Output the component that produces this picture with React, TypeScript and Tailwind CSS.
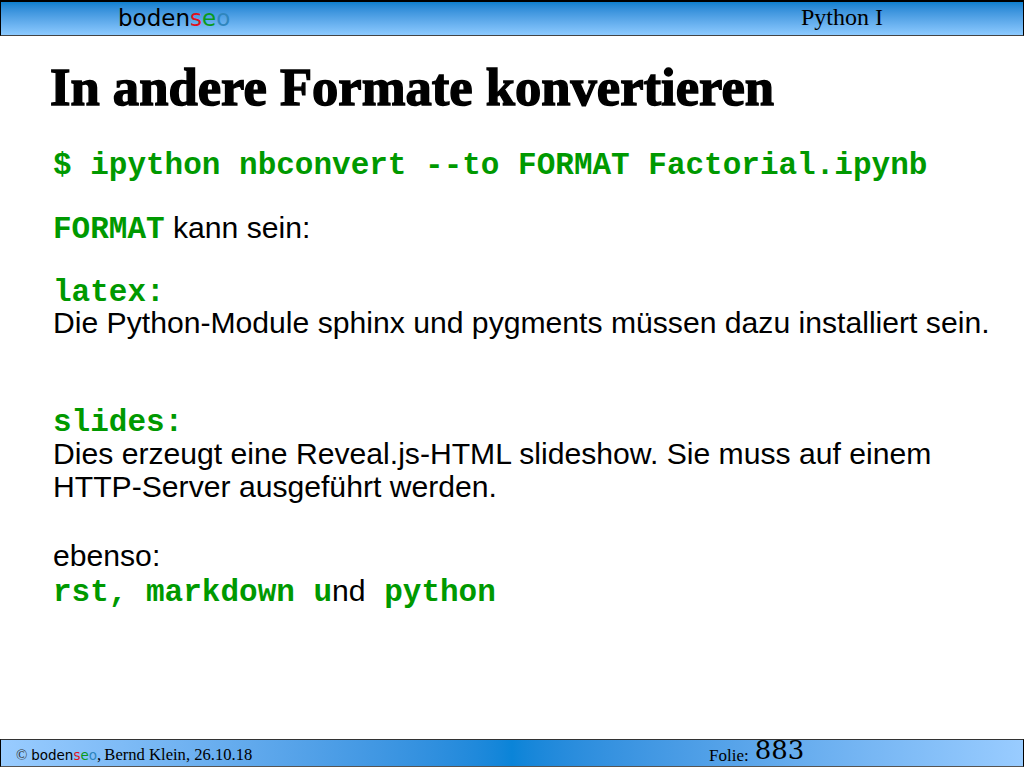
const sans = "font-['Liberation_Sans',Arial,sans-serif]";
const serif = "font-['Liberation_Serif','Times_New_Roman',serif]";
const mono = "font-['Liberation_Mono','Courier_New',monospace] font-bold text-[#009900] text-[31px]";

function Logo({ className }: { className: string }) {
  return (
    <span className={`font-['DejaVu_Sans',sans-serif] ${className}`}>
      <span className="text-black">boden</span>
      <span className="text-[#e0101c]">s</span>
      <span className="text-[#0a9a1a]">e</span>
      <span className="text-[#2f86bd]">o</span>
    </span>
  );
}

export default function App() {
  return (
    <div className={`flex h-[768px] w-[1024px] flex-col overflow-hidden bg-white text-black ${sans}`}>
      <header className="flex h-9 items-center border border-t-2 border-black border-b-[#444] bg-gradient-to-b from-[#0a80d0] to-[#8ccaff]">
        <div className="ml-[117px] w-[683px] leading-none">
          <Logo className="text-[23px]" />
        </div>
        <span className={`${serif} pb-1 text-[24px] leading-none`}>Python I</span>
      </header>

      <main className="flex-1 pl-[53px]">
        <h1 className={`${serif} ml-[-3px] mt-6 text-[52.6px] font-bold leading-[54px] [-webkit-text-stroke:1.4px_black]`}>
          In andere Formate konvertieren
        </h1>
        <div className="mt-[35px] text-[30.15px] leading-[32px]">
          <p className={`${mono} leading-[34px]`}>$ ipython nbconvert --to FORMAT Factorial.ipynb</p>
          <p className="mt-[29px]">
            <span className={mono}>FORMAT</span> kann sein:
          </p>
          <p className={`${mono} mt-[32px] leading-[29px]`}>latex:</p>
          <p>Die Python-Module sphinx und pygments müssen dazu installiert sein.</p>
          <p className={`${mono} mt-[69px] leading-[30px]`}>slides:</p>
          <p>Dies erzeugt eine Reveal.js-HTML slideshow. Sie muss auf einem</p>
          <p className="mt-px">HTTP-Server ausgeführt werden.</p>
          <p className="mt-[37px]">ebenso:</p>
          <p className="mt-[3px]">
            <span className={mono}>rst, markdown u</span>nd<span className={mono}> python</span>
          </p>
        </div>
      </main>

      <footer className="mb-px flex h-7 items-center border border-black border-b-[#555] border-t-[#333] bg-gradient-to-r from-[#99ccff] via-[#0a84d8] to-[#99ccff]">
        <div className={`${serif} ml-[15px] w-[693px] pt-1 text-[16.6px] leading-none whitespace-nowrap`}>
          <span className="text-[15px] text-[#333]">© </span>
          <Logo className="text-[13.5px]" />,<span className="ml-[-1px]"> Bernd Klein, 26.10.18</span>
        </div>
        <span className={`${serif} pt-1 text-[17px] leading-none`}>Folie:</span>
        <span className="mb-1.5 ml-[6px] font-['DejaVu_Serif',serif] text-[26px] leading-none">883</span>
      </footer>
    </div>
  );
}
